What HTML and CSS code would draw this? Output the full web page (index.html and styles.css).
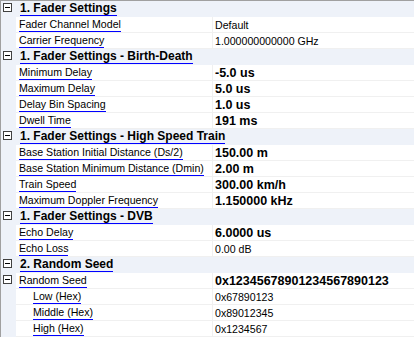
FILE: index.html
```html
<!DOCTYPE html>
<html lang="en">
<head>
  <meta charset="UTF-8">
  <title>Fader Properties</title>
  <link rel="stylesheet" href="styles.css">
</head>
<body>
  <div class="grid">
    <div class="row cat"><span class="gutter"><i class="box"></i></span><span class="cat-name">1. Fader Settings</span></div>
    <div class="row"><span class="gutter"></span><span class="name"><u>Fader Channel Model</u></span><span class="value">Default</span></div>
    <div class="row"><span class="gutter"></span><span class="name"><u>Carrier Frequency</u></span><span class="value">1.000000000000 GHz</span></div>

    <div class="row cat"><span class="gutter"><i class="box"></i></span><span class="cat-name">1. Fader Settings - Birth-Death</span></div>
    <div class="row"><span class="gutter"></span><span class="name"><u>Minimum Delay</u></span><span class="value bold">-5.0 us</span></div>
    <div class="row"><span class="gutter"></span><span class="name"><u>Maximum Delay</u></span><span class="value bold">5.0 us</span></div>
    <div class="row"><span class="gutter"></span><span class="name"><u>Delay Bin Spacing</u></span><span class="value bold">1.0 us</span></div>
    <div class="row"><span class="gutter"></span><span class="name"><u>Dwell Time</u></span><span class="value bold">191 ms</span></div>

    <div class="row cat"><span class="gutter"><i class="box"></i></span><span class="cat-name">1. Fader Settings - High Speed Train</span></div>
    <div class="row"><span class="gutter"></span><span class="name"><u>Base Station Initial Distance (Ds/2)</u></span><span class="value bold">150.00 m</span></div>
    <div class="row"><span class="gutter"></span><span class="name"><u>Base Station Minimum Distance (Dmin)</u></span><span class="value bold">2.00 m</span></div>
    <div class="row"><span class="gutter"></span><span class="name"><u>Train Speed</u></span><span class="value bold">300.00 km/h</span></div>
    <div class="row"><span class="gutter"></span><span class="name"><u>Maximum Doppler Frequency</u></span><span class="value bold">1.150000 kHz</span></div>

    <div class="row cat"><span class="gutter"><i class="box"></i></span><span class="cat-name">1. Fader Settings - DVB</span></div>
    <div class="row"><span class="gutter"></span><span class="name"><u>Echo Delay</u></span><span class="value bold">6.0000 us</span></div>
    <div class="row"><span class="gutter"></span><span class="name"><u>Echo Loss</u></span><span class="value">0.00 dB</span></div>

    <div class="row cat"><span class="gutter"><i class="box"></i></span><span class="cat-name">2. Random Seed</span></div>
    <div class="row"><span class="gutter"><i class="box"></i></span><span class="name"><u>Random Seed</u></span><span class="value bold">0x12345678901234567890123</span></div>
    <div class="row"><span class="gutter"></span><span class="name sub"><u>Low (Hex)</u></span><span class="value">0x67890123</span></div>
    <div class="row"><span class="gutter"></span><span class="name sub"><u>Middle (Hex)</u></span><span class="value">0x89012345</span></div>
    <div class="row"><span class="gutter"></span><span class="name sub"><u>High (Hex)</u></span><span class="value">0x1234567</span></div>
  </div>
</body>
</html>
```

FILE: styles.css
```css
body { margin: 0; background: #fff; font-family: "Liberation Sans", Arial, sans-serif; font-size: 10.6px; color: #000; }
.grid { border-top: 1px solid #a0a0a0; border-left: 1px solid #a0a0a0; width: 413px; height: 336px; overflow: hidden; }
.row { display: flex; align-items: flex-start; height: 16px; white-space: nowrap; }
.gutter { width: 15px; height: 16px; flex: none; background: #eef2f9; position: relative; }
.name { width: 193px; height: 15px; flex: none; padding-left: 3px; border-bottom: 1px solid #f0f0f0; }
.name.sub { width: 179px; padding-left: 17px; }
.name u { display: inline-block; vertical-align: top; height: 14px; line-height: 15px; text-decoration: none; border-bottom: 1px solid #0000ff; }
.value { flex: 1; height: 14px; padding-top: 1px; line-height: 15px; padding-left: 2px; border-left: 1px solid #f0f0f0; border-bottom: 1px solid #f0f0f0; overflow: hidden; }
.bold { font-weight: bold; font-size: 12.5px; line-height: 14px; }
.cat { background: #eef2f9; }
.cat-name { display: inline-block; margin-left: 4px; height: 14px; font-weight: bold; font-size: 12px; line-height: 15px; border-bottom: 1px solid #0000ff; }
.box { position: absolute; left: 2px; top: 2px; width: 7px; height: 7px; border: 1px solid #404040; background: #fff; }
.box::after { content: ""; position: absolute; left: 1px; top: 3px; width: 5px; height: 1px; background: #000; }
```
